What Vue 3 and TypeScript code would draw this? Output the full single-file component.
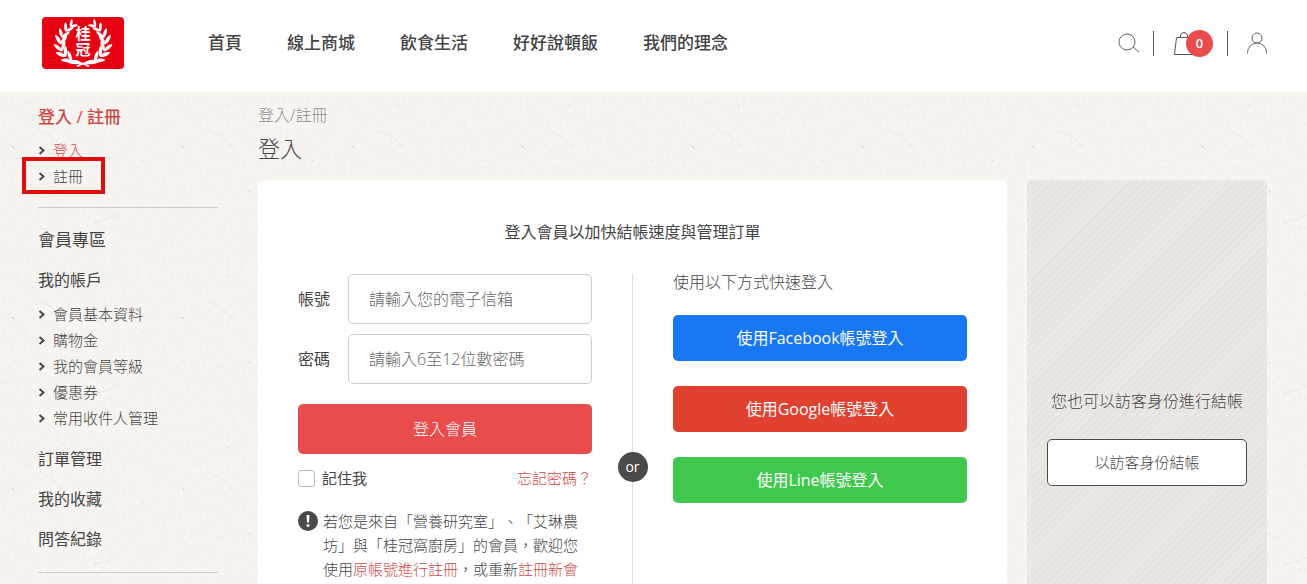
<script setup lang="ts">
import { ref } from 'vue'

interface Leaf { x: number; y: number; angle: number; scale: number }

const navItems: string[] = ['首頁', '線上商城', '飲食生活', '好好說頓飯', '我們的理念']
const accountLinks: string[] = ['會員基本資料', '購物金', '我的會員等級', '優惠券', '常用收件人管理']
const sections: string[] = ['訂單管理', '我的收藏', '問答紀錄']
const providers = [
  { key: 'facebook', label: '使用Facebook帳號登入' },
  { key: 'google', label: '使用Google帳號登入' },
  { key: 'line', label: '使用Line帳號登入' },
]

const account = ref<string>('')
const password = ref<string>('')
const remember = ref<boolean>(false)

// Leaf pairs of the left laurel branch, from the stem at the bottom to the tip.
const leaves: Leaf[] = [
  { x: 27, y: 42, angle: -52, scale: 1.2 },
  { x: 22, y: 37, angle: -34, scale: 1.2 },
  { x: 19, y: 31, angle: -16, scale: 1.2 },
  { x: 19, y: 24, angle: 2, scale: 1.2 },
  { x: 21, y: 18, angle: 18, scale: 1.1 },
  { x: 25, y: 12, angle: 32, scale: 1 },
  { x: 30, y: 8, angle: 45, scale: 0.9 },
]
const leafTransform = (l: Leaf): string => `translate(${l.x} ${l.y}) rotate(${l.angle}) scale(${l.scale})`
</script>

<template>
  <div class="page">
    <svg class="paper" aria-hidden="true">
      <defs>
        <filter id="grain" x="0" y="0" width="100%" height="100%">
          <feTurbulence type="fractalNoise" baseFrequency="0.3 0.18" numOctaves="3" seed="4" stitchTiles="stitch" />
          <feColorMatrix values="0 0 0 0 0.5  0 0 0 0 0.45  0 0 0 0 0.4  0.16 0 0 0 -0.06" />
        </filter>
        <pattern id="fibres" width="170" height="171" patternUnits="userSpaceOnUse">
          <rect width="170" height="171" filter="url(#grain)" />
          <g fill="none" stroke="#dedad4" stroke-linecap="round">
            <path d="M40 131q14 4 23 18" stroke-opacity=".5" />
            <path d="M93 52q14-3 25-8" stroke-opacity=".5" />
            <path d="M12 146l2 2" stroke="#c2bdb6" />
            <path d="M109 56h1M58 105l1 1M142 160l1 1M79 20l2 1" stroke="#d6d1cb" />
          </g>
        </pattern>
      </defs>
      <rect width="100%" height="100%" fill="url(#fibres)" />
    </svg>

    <header class="header">
      <a href="#" class="logo" aria-label="桂冠">
        <svg width="82" height="52" viewBox="0 0 82 52">
          <rect width="82" height="52" rx="4" fill="#e60012" />
          <g v-for="side in [1, -1]" :key="side" :transform="side === 1 ? '' : 'translate(82 0) scale(-1 1)'" fill="#fff">
            <path
              v-for="(leaf, i) in leaves"
              :key="i"
              :transform="leafTransform(leaf)"
              d="M0 3C-2 2-5-1-5-5C-2-4 0-1 0 1C0-1 2-4 5-5C5-1 2 2 0 3Z"
            />
            <path d="M23 44q10-3 16 1q6 2 9 4l-2 1q-4-3-9-3q-8 1-14-3z" />
          </g>
          <text x="41" y="22" class="logo-text">桂</text>
          <text x="41" y="38" class="logo-text">冠</text>
        </svg>
      </a>
      <nav class="nav">
        <a v-for="item in navItems" :key="item" href="#">{{ item }}</a>
      </nav>
      <div class="tools">
        <button type="button" class="tool search" aria-label="搜尋">
          <svg width="22" height="20" viewBox="0 0 22 20" fill="none" stroke="#666">
            <circle cx="9" cy="9" r="8" />
            <path d="M15 14l6 5" />
          </svg>
        </button>
        <button type="button" class="tool cart" aria-label="購物車">
          <svg width="22" height="25" viewBox="0 0 22 25" fill="none" stroke="#555">
            <path d="M3.500 6.500H18l2.500 17H1.500zM7.500 6.500V5a3.500 3.500 0 0 1 7 0v1.500" />
          </svg>
          <span class="count">0</span>
        </button>
        <button type="button" class="tool user" aria-label="會員">
          <svg width="22" height="22" viewBox="0 0 22 22" fill="none" stroke="#666">
            <circle cx="11" cy="6" r="5" />
            <path d="M1.500 21.500v-1a9.500 9.500 0 0 1 19 0v1" />
          </svg>
        </button>
      </div>
    </header>

    <main class="main">
      <aside class="sidebar">
        <h2 class="side-title active">登入 / 註冊</h2>
        <ul class="links">
          <li><a href="#" class="active"><svg class="chev" viewBox="0 0 7 9"><path d="M1.500 1l4 3.500l-4 3.500" /></svg>登入</a></li>
          <li class="marked"><a href="#"><svg class="chev" viewBox="0 0 7 9"><path d="M1.500 1l4 3.500l-4 3.500" /></svg>註冊</a></li>
        </ul>
        <hr />
        <h2 class="side-title">會員專區</h2>
        <h3>我的帳戶</h3>
        <ul class="links">
          <li v-for="link in accountLinks" :key="link">
            <a href="#"><svg class="chev" viewBox="0 0 7 9"><path d="M1.500 1l4 3.500l-4 3.500" /></svg>{{ link }}</a>
          </li>
        </ul>
        <h3 v-for="s in sections" :key="s">{{ s }}</h3>
        <hr class="last" />
      </aside>

      <div class="content">
        <p class="crumb">登入/註冊</p>
        <h1>登入</h1>
        <div class="panels">
          <section class="card">
            <h2 class="lead">登入會員以加快結帳速度與管理訂單</h2>
            <div class="columns">
              <form class="form" @submit.prevent>
                <div class="field">
                  <label for="account">帳號</label>
                  <input id="account" v-model="account" type="text" placeholder="請輸入您的電子信箱" />
                </div>
                <div class="field">
                  <label for="password">密碼</label>
                  <input id="password" v-model="password" type="password" placeholder="請輸入6至12位數密碼" />
                </div>
                <button type="submit" class="submit">登入會員</button>
                <div class="options">
                  <label class="remember"><input v-model="remember" type="checkbox" />記住我</label>
                  <a href="#" class="red">忘記密碼？</a>
                </div>
                <div class="note">
                  <svg width="20" height="20" viewBox="0 0 20 20">
                    <circle cx="10" cy="10" r="10" fill="#4a4a4a" />
                    <path d="M8.500 4h3l-.5 7.500H9z" fill="#fff" />
                    <circle cx="10" cy="14.500" r="1.500" fill="#fff" />
                  </svg>
                  <p>若您是來自「營養研究室」、「艾琳農坊」與「桂冠窩廚房」的會員，歡迎您使用<a href="#" class="red">原帳號進行註冊</a>，或重新<a href="#" class="red">註冊新會</a></p>
                </div>
              </form>
              <div class="divider"><span>or</span></div>
              <div class="social">
                <p>使用以下方式快速登入</p>
                <button v-for="p in providers" :key="p.key" type="button" :class="p.key">{{ p.label }}</button>
              </div>
            </div>
          </section>
          <section class="guest">
            <p>您也可以訪客身份進行結帳</p>
            <button type="button">以訪客身份結帳</button>
          </section>
        </div>
      </div>
    </main>
  </div>
</template>

<style>
body {
  margin: 0;
  background: #f8f5f1;
}
</style>

<style scoped>
.page {
  position: relative;
  min-height: 100vh;
  font-family: "Open Sans", "Noto Sans CJK TC", sans-serif;
  font-size: 16px;
  line-height: 24px;
  font-weight: 300;
  color: #444;
  text-spacing-trim: space-all;
}
.page *, .page *::after { box-sizing: border-box; }
.paper {
  position: absolute;
  inset: 0;
  width: 100%;
  height: 100%;
}
h1, h2, h3, p, ul { margin: 0; padding: 0; font-weight: 300; }
ul { list-style: none; }
a { color: inherit; text-decoration: none; }
button, input { font-family: inherit; font-weight: inherit; color: inherit; }
button { border: 0; padding: 0 0 2px; cursor: pointer; }
.header {
  position: relative;
  display: flex;
  align-items: center;
  height: 92px;
  padding: 0 39px 6px 42px;
  background: #fff;
}
.logo, .logo svg { display: block; }
.logo-text {
  fill: #fff;
  font-size: 15px;
  font-weight: 700;
  text-anchor: middle;
}
.nav {
  display: flex;
  gap: 45px;
  margin-left: 84px;
  font-size: 17px;
  font-weight: 500;
}
.tools {
  display: flex;
  align-items: center;
  margin-left: auto;
}
.tool {
  display: flex;
  align-items: center;
  height: 25px;
  padding: 0;
  background: none;
}
.search { padding-right: 13px; }
.cart {
  padding: 0 14px 0 19px;
  border: solid #555;
  border-width: 0 1px;
}
.count {
  width: 27px;
  height: 27px;
  margin-left: -9px;
  border-radius: 50%;
  background: #e84c4c;
  color: #fff;
  font-size: 13px;
  font-weight: 600;
  line-height: 27px;
  text-align: center;
}
.user { padding-left: 18px; }
.main {
  position: relative;
  display: flex;
  gap: 40px;
  padding: 0 40px 0 38px;
}
.sidebar { flex: 0 0 180px; padding-top: 13px; }
.side-title { font-size: 17px; font-weight: 400; }
.side-title.active { margin-bottom: 8px; font-weight: 500; }
.active, .red { color: #cf4646; }
.links { font-size: 15px; line-height: 26px; }
.links a { display: flex; align-items: center; }
.chev {
  width: 7px;
  height: 9px;
  margin-right: 8px;
  fill: none;
  stroke: #4a4a4a;
  stroke-width: 2;
}
.marked { position: relative; }
.marked::after {
  content: "";
  position: absolute;
  top: -6px;
  left: -16px;
  width: 83px;
  height: 37px;
  border: 4px solid #e00d0d;
  pointer-events: none;
}
hr { margin: 18px 0 20px; border: 0; border-top: 1px solid #ccc9c5; }
h3 { margin-top: 16px; font-size: 16px; font-weight: 400; }
h3 + .links { margin-top: 9px; margin-bottom: 16px; }
.last { margin-top: 21px; }
.content { flex: 1; min-width: 0; padding-top: 11px; }
.crumb { color: #8c8c8c; }
h1 { margin: 5px 0 15px; font-size: 22px; line-height: 33px; }
.panels { display: flex; gap: 20px; }
.card {
  flex: 1;
  padding: 40px 40px 34px;
  border-radius: 5px;
  background: #fff;
}
.lead { margin-bottom: 30px; font-size: 16px; font-weight: 400; text-align: center; }
.columns {
  display: grid;
  grid-template-columns: minmax(0, 1fr) 1px minmax(0, 1fr);
  gap: 40px;
  min-height: 386px;
}
.field {
  display: flex;
  align-items: center;
  gap: 18px;
  margin-bottom: 10px;
}
.field label { font-weight: 400; }
.field input {
  flex: 1;
  min-width: 0;
  height: 50px;
  padding: 0 20px;
  border: 1px solid #ccc;
  border-radius: 5px;
  background: #fff;
  font-size: 16px;
}
.field input::placeholder { color: #666; }
.submit {
  width: 100%;
  height: 50px;
  margin-top: 10px;
  border-radius: 5px;
  background: #e84c4c;
  color: #fff;
  font-size: 16px;
}
.options {
  display: flex;
  justify-content: space-between;
  margin-top: 12px;
  font-size: 15px;
}
.remember { display: flex; align-items: center; font-weight: 400; }
.remember input {
  appearance: none;
  width: 17px;
  height: 17px;
  margin: 0 7px 0 0;
  border: 1px solid #bbb;
  border-radius: 3px;
  background: #fff;
}
.remember input:checked { background: #e84c4c; }
.note {
  display: flex;
  align-items: flex-start;
  gap: 5px;
  margin-top: 19px;
  font-size: 15px;
}
.note svg { flex: none; margin-top: 2px; }
.divider {
  display: flex;
  align-items: center;
  justify-content: center;
  background: #ddd;
}
.divider span {
  flex: none;
  width: 30px;
  height: 30px;
  border-radius: 50%;
  background: #4a4a4a;
  color: #fff;
  font-size: 14px;
  font-weight: 400;
  line-height: 30px;
  text-align: center;
}
.social { display: flex; flex-direction: column; gap: 25px; }
.social p { margin: -4px 0 -4px; }
.social button {
  height: 46px;
  border-radius: 5px;
  color: #fff;
  font-size: 16px;
  font-weight: 400;
}
.facebook { background: #1877f2; }
.google { background: #e04130; }
.line { background: #40c84e; }
.guest {
  display: flex;
  flex: 0 0 240px;
  flex-direction: column;
  justify-content: center;
  padding: 0 20px;
  border-radius: 5px;
  background: repeating-linear-gradient(135deg, #ebe8e4 0 3px, #e6e3df 3px 5px);
  text-align: center;
}
.guest button {
  height: 47px;
  margin-top: 26px;
  border: 1px solid #4a4a4a;
  border-radius: 5px;
  background: #fff;
  font-size: 15px;
}
</style>
